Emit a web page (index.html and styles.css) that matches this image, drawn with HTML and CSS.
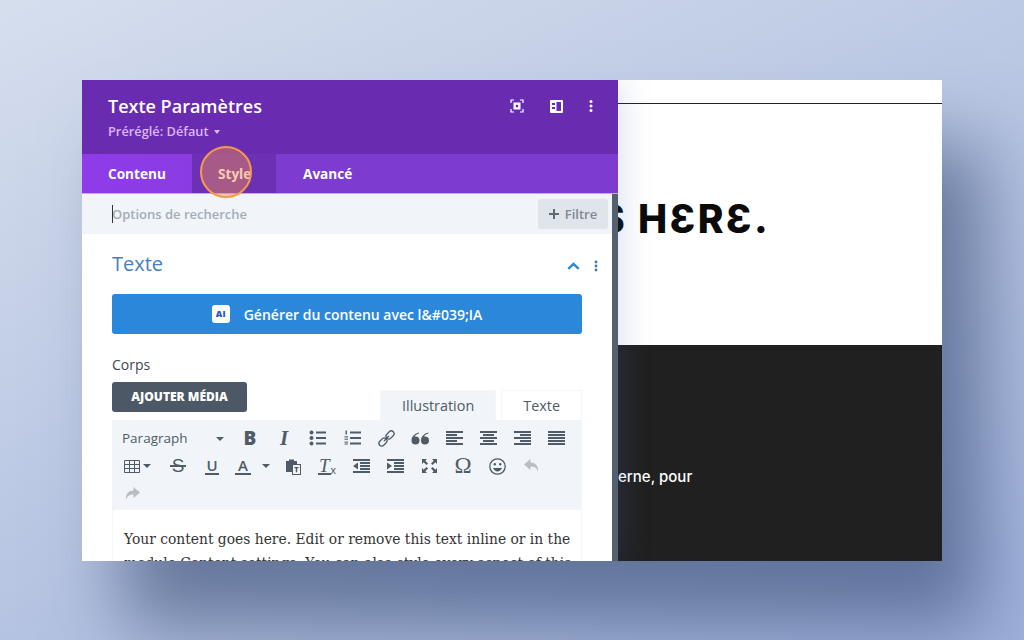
FILE: index.html
```html
<!DOCTYPE html>
<html>
<head>
    <title>Texte Paramètres</title>
    <link rel="stylesheet" href="styles.css">
</head>
<body>
    <div class="stage">
        <div class="page">
            <div class="page-top"></div>
            <div class="page-hero"><span class="hero-text">S HƐRƐ.</span></div>
            <div class="page-dark"><span class="dark-text">erne, pour</span></div>
        </div>

        <div class="panel">
            <div class="panel-head">
                <div class="panel-titles">
                    <div class="panel-title">Texte Paramètres</div>
                    <div class="panel-preset">Préréglé: Défaut <span class="caret-small"></span></div>
                </div>
                <div class="panel-icons">
                    <svg width="14" height="14" viewBox="0 0 14 14"><path d="M1 4V1h3M10 1h3v3M13 10v3h-3M4 13H1v-3" fill="none" stroke="#fff" stroke-width="1.2"/><rect x="3.5" y="3.5" width="7" height="7" fill="#fff"/><rect x="5.8" y="5.8" width="2.4" height="2.4" fill="#692cb0"/></svg>
                    <svg width="13" height="13" viewBox="0 0 13 13"><rect width="13" height="13" rx="1" fill="#fff"/><rect x="6.5" y="2" width="4.5" height="9" fill="#692cb0"/><rect x="2" y="3" width="3" height="2" fill="#692cb0"/><rect x="2" y="7" width="3" height="2" fill="#692cb0"/></svg>
                    <svg width="4" height="14" viewBox="0 0 4 14"><circle cx="2" cy="2.5" r="1.5" fill="#fff"/><circle cx="2" cy="7" r="1.5" fill="#fff"/><circle cx="2" cy="11.5" r="1.5" fill="#fff"/></svg>
                </div>
            </div>

            <div class="tabs">
                <div class="tab tab-first">Contenu</div>
                <div class="tab tab-active">Style<span class="pulse"></span></div>
                <div class="tab tab-last">Avancé</div>
            </div>

            <div class="panel-body">
                <div class="search-row">
                    <div class="search-input"><span class="cursor"></span>Options de recherche</div>
                    <div class="filter-btn">
                        <svg width="10" height="10" viewBox="0 0 10 10"><path d="M5 0v10M0 5h10" stroke="#5e6a76" stroke-width="2"/></svg>
                        <span>Filtre</span>
                    </div>
                </div>

                <div class="section">
                    <div class="section-head">
                        <div class="section-title">Texte</div>
                        <div class="section-tools">
                            <svg width="13" height="8" viewBox="0 0 13 8"><path d="M1.300 6.800 6.500 1.800l5.200 5" fill="none" stroke="#2b87da" stroke-width="2.300"/></svg>
                            <svg width="4" height="12" viewBox="0 0 4 12"><circle cx="2" cy="2" r="1.400" fill="#3b7cb8"/><circle cx="2" cy="6" r="1.400" fill="#3b7cb8"/><circle cx="2" cy="10" r="1.400" fill="#3b7cb8"/></svg>
                        </div>
                    </div>

                    <div class="ai-btn">
                        <span class="ai-badge">AI</span>
                        <span>Générer du contenu avec l&amp;#039;IA</span>
                    </div>

                    <div class="field-label">Corps</div>

                    <div class="media-row">
                        <div class="media-btn">AJOUTER MÉDIA</div>
                        <div class="editor-tabs">
                            <div class="editor-tab editor-tab-on">Illustration</div>
                            <div class="editor-tab">Texte</div>
                        </div>
                    </div>

                    <div class="toolbar">
                        <div class="tool-row">
                            <div class="format-select">Paragraph<span class="caret"></span></div>
                            <div class="tool tool-letter tool-b">B</div>
                            <div class="tool tool-letter tool-i">I</div>
                            <div class="tool"><svg width="18" height="16" viewBox="0 0 18 16"><g fill="#4f5b66"><circle cx="2.500" cy="2.500" r="2"/><circle cx="2.500" cy="8" r="2"/><circle cx="2.500" cy="13.500" r="2"/><rect x="7" y="1.500" width="10" height="2"/><rect x="7" y="7" width="10" height="2"/><rect x="7" y="12.500" width="10" height="2"/></g></svg></div>
                            <div class="tool"><svg width="17" height="16" viewBox="0 0 17 16"><g fill="#4f5b66"><rect x="6" y="1.500" width="11" height="2"/><rect x="6" y="7" width="11" height="2"/><rect x="6" y="12.500" width="11" height="2"/><rect x="1.500" y="0.500" width="1.400" height="4"/><rect x="0.500" y="6.300" width="3.500" height="1.100"/><rect x="0.500" y="8.600" width="3.500" height="1.100"/><rect x="0.500" y="11.600" width="3.500" height="1"/><rect x="0.500" y="13.500" width="3.500" height="1"/></g></svg></div>
                            <div class="tool"><svg width="17" height="17" viewBox="0 0 17 17"><g fill="none" stroke="#4f5b66" stroke-width="1.300" transform="rotate(-45 8.500 8.500)"><rect x="-1" y="5.700" width="9" height="5.600" rx="2.800"/><rect x="9" y="5.700" width="9" height="5.600" rx="2.800"/><path d="M5 8.500h7"/></g></svg></div>
                            <div class="tool"><svg width="18" height="13" viewBox="0 0 18 13"><path d="M8 0.500C3.500 1.500.5 4.500.5 8.500a4 4 0 1 0 4-4c-.4 0-.7 0-1 .1C4.200 3 5.800 2 8 1.500zM17.500.5c-4.500 1-7.500 4-7.500 8a4 4 0 1 0 4-4c-.4 0-.7 0-1 .1.700-1.600 2.300-2.600 4.500-3.100z" fill="#4f5b66"/></svg></div>
                            <div class="tool"><svg width="17" height="14" viewBox="0 0 17 14"><path d="M0 0h17v2H0zM0 3h11v2H0zM0 6h17v2H0zM0 9h11v2H0zM0 12h17v2H0z" fill="#4f5b66"/></svg></div>
                            <div class="tool"><svg width="17" height="14" viewBox="0 0 17 14"><path d="M0 0h17v2H0zM3 3h11v2H3zM0 6h17v2H0zM3 9h11v2H3zM0 12h17v2H0z" fill="#4f5b66"/></svg></div>
                            <div class="tool"><svg width="17" height="14" viewBox="0 0 17 14"><path d="M0 0h17v2H0zM6 3h11v2H6zM0 6h17v2H0zM6 9h11v2H6zM0 12h17v2H0z" fill="#4f5b66"/></svg></div>
                            <div class="tool"><svg width="17" height="14" viewBox="0 0 17 14"><path d="M0 0h17v2H0zM0 3h17v2H0zM0 6h17v2H0zM0 9h17v2H0zM0 12h17v2H0z" fill="#4f5b66"/></svg></div>
                        </div>
                        <div class="tool-row">
                            <div class="tool tool-table"><svg width="16" height="13" viewBox="0 0 16 13"><path d="M.5.5h15v12H.5zM.5 4.500h15M.5 8.500h15M5.500.5v12M10.500.5v12" fill="none" stroke="#4f5b66"/></svg><span class="caret caret-tight"></span></div>
                            <div class="tool tool-letter tool-s">S</div>
                            <div class="tool tool-letter tool-u"><span class="under">U</span></div>
                            <div class="tool tool-letter tool-a"><span class="under">A</span><span class="caret caret-a"></span></div>
                            <div class="tool"><svg width="16" height="17" viewBox="0 0 16 17"><path d="M1 3h3V1.500h5V3h3v3H7v8H1z" fill="#4f5b66"/><rect x="7.500" y="6.500" width="8" height="10" fill="#f1f5f9" stroke="#4f5b66"/><path d="M9.500 9h4v1.300h-1.300v4h-1.400v-4H9.500z" fill="#4f5b66"/></svg></div>
                            <div class="tool tool-letter tool-clear"><span class="under">T</span><span class="tool-x">x</span></div>
                            <div class="tool"><svg width="17" height="14" viewBox="0 0 17 14"><path d="M0 0h17v2H0zM7 3h10v2H7zM7 6h10v2H7zM7 9h10v2H7zM0 12h17v2H0zM5 3.500v7L0 7z" fill="#4f5b66"/></svg></div>
                            <div class="tool"><svg width="17" height="14" viewBox="0 0 17 14"><path d="M0 0h17v2H0zM7 3h10v2H7zM7 6h10v2H7zM7 9h10v2H7zM0 12h17v2H0zM0 3.500v7L5 7z" fill="#4f5b66"/></svg></div>
                            <div class="tool"><svg width="17" height="16" viewBox="0 0 17 16"><path d="M1 1h5L4.300 2.700 7 5.400 5.400 7 2.700 4.300 1 6zM16 1v5l-1.700-1.700L11.600 7 10 5.400l2.700-2.700L11 1zM1 15v-5l1.700 1.700L5.400 9 7 10.600l-2.700 2.700L6 15zM16 15h-5l1.700-1.700L10 10.600 11.600 9l2.700 2.700L16 10z" fill="#4f5b66"/></svg></div>
                            <div class="tool tool-letter tool-omega">Ω</div>
                            <div class="tool"><svg width="17" height="17" viewBox="0 0 17 17"><circle cx="8.500" cy="8.500" r="7.700" fill="none" stroke="#4f5b66" stroke-width="1.300"/><circle cx="5.800" cy="6.300" r="1.200" fill="#4f5b66"/><circle cx="11.200" cy="6.300" r="1.200" fill="#4f5b66"/><path d="M4 10c1 2.300 2.700 3.400 4.500 3.400S12 12.300 13 10z" fill="#4f5b66"/></svg></div>
                            <div class="tool"><svg width="15" height="14" viewBox="0 0 15 14"><path d="M6.500 0 0 5.500 6.500 11V7.500c3.500 0 6 1 7.500 5 .5-5-2-9-7.500-9z" fill="#b9bec4"/></svg></div>
                        </div>
                        <div class="tool-row">
                            <div class="tool tool-redo"><svg width="15" height="14" viewBox="0 0 15 14"><path d="M8.500 0 15 5.500 8.500 11V7.500c-3.500 0-6 1-7.500 5-.5-5 2-9 7.500-9z" fill="#b9bec4"/></svg></div>
                        </div>
                    </div>

                    <div class="editor-content">Your content goes here. Edit or remove this text inline or in the<br>module Content settings. You can also style every aspect of this</div>
                </div>
            </div>
        </div>
    </div>
</body>
</html>
```

FILE: styles.css
```css
/* Backdrop */
html, body {
    margin: 0;
    padding: 0;
}
body {
    width: 1024px;
    height: 640px;
    overflow: hidden;
    background: linear-gradient(155deg, #d6deee 0%, #c2cee6 35%, #aebde0 70%, #a0b2dc 100%);
}
.stage {
    position: relative;
    display: flex;
    width: 860px;
    height: 481px;
    margin: 80px 0 0 82px;
    background: #fff;
    overflow: hidden;
    box-shadow: 40px 65px 70px rgba(50, 70, 110, 0.6);
}

/* Page behind the panel */
.page {
    display: flex;
    flex-direction: column;
    width: 100%;
}
.page-top {
    height: 23px;
    border-bottom: 1px solid #222;
    background: #fff;
}
.page-hero {
    height: 241px;
    background: #fff;
    padding-left: 517px;
    box-sizing: border-box;
}
.hero-text {
    display: block;
    margin-top: 91px;
    font: 800 39px/48px Inter, "Liberation Sans", sans-serif;
    letter-spacing: 2.4px;
    color: #0b0b0b;
}
.page-dark {
    flex: 1;
    background: #202020;
    padding-left: 536px;
}
.dark-text {
    display: block;
    margin-top: 122px;
    font: 500 15px/20px Inter, "Liberation Sans", sans-serif;
    color: #fff;
}

/* Settings panel */
.panel {
    position: absolute;
    left: 0;
    top: 0;
    width: 536px;
    height: 481px;
    overflow: hidden;
    font-family: "Open Sans", sans-serif;
    box-shadow: 4px 0 30px rgba(70, 110, 180, 0.2);
}
.panel-head {
    display: flex;
    justify-content: space-between;
    height: 74px;
    box-sizing: border-box;
    padding: 14px 25px 0 26px;
    background: #692cb0;
}
.panel-title {
    font-size: 18px;
    line-height: 24px;
    font-weight: 600;
    color: #fff;
}
.panel-preset {
    margin-top: 5px;
    font-size: 12.8px;
    line-height: 17px;
    font-weight: 600;
    color: #d9b8f5;
}
.caret-small {
    display: inline-block;
    margin-left: 2px;
    vertical-align: 2px;
    border: 3px solid transparent;
    border-top: 4px solid #d9b8f5;
    border-bottom: 0;
}
.panel-icons {
    display: flex;
    align-items: center;
    gap: 26px;
    height: 24px;
}
.tabs {
    display: flex;
    height: 40px;
    box-sizing: border-box;
    background: #7d3bcf;
    border-bottom: 1px solid #c9a8ea;
}
.tab {
    font-size: 13.6px;
    line-height: 39px;
    font-weight: 700;
    color: #fff;
    padding: 0 26px;
}
.tab-first {
    width: 58px;
    background: linear-gradient(90deg, #8f3bea, #8a3ce2);
}
.tab-active {
    position: relative;
    width: 32px;
    background: #6c30b5;
}
.tab-last {
    padding-left: 27px;
}
.pulse {
    position: absolute;
    left: 8px;
    top: -8px;
    width: 52px;
    height: 52px;
    box-sizing: border-box;
    border: 2px solid #f59a4c;
    border-radius: 50%;
    background: rgba(240, 140, 80, 0.45);
}

/* Panel body */
.panel-body {
    width: 530px;
    height: 367px;
    background: #fff;
    border-right: 6px solid #54606e;
    overflow: hidden;
}
.search-row {
    display: flex;
    align-items: center;
    justify-content: space-between;
    height: 40px;
    padding: 0 4px 0 30px;
    background: #f1f5f9;
}
.search-input {
    position: relative;
    font-size: 13px;
    font-weight: 600;
    color: #a3adb8;
}
.cursor {
    position: absolute;
    left: 0;
    top: 0;
    width: 1px;
    height: 18px;
    background: #333;
}
.filter-btn {
    display: flex;
    align-items: center;
    justify-content: center;
    gap: 6px;
    width: 70px;
    height: 30px;
    border-radius: 3px;
    background: #e0e5eb;
    font-size: 13px;
    font-weight: 600;
    color: #7e8993;
}
.section {
    padding: 0 30px;
}
.section-head {
    position: relative;
    height: 60px;
}
.section-title {
    font-size: 20px;
    line-height: 60px;
    color: #4680bc;
}
.section-tools {
    position: absolute;
    right: -16px;
    top: 26px;
    display: flex;
    align-items: center;
    gap: 14px;
}
.ai-btn {
    display: flex;
    align-items: center;
    justify-content: center;
    gap: 14px;
    height: 40px;
    border-radius: 3px;
    background: #2b87da;
    font-size: 14px;
    font-weight: 600;
    color: #fff;
}
.ai-badge {
    width: 18px;
    height: 18px;
    border-radius: 3px;
    background: #fff;
    font-size: 9px;
    line-height: 18px;
    font-weight: 800;
    text-align: center;
    color: #1f55c9;
}
.field-label {
    margin-top: 21px;
    font-size: 14px;
    line-height: 20px;
    font-weight: 500;
    color: #3d4650;
}
.media-row {
    display: flex;
    justify-content: space-between;
    align-items: flex-end;
    height: 38px;
    margin-top: 7px;
}
.media-btn {
    align-self: flex-start;
    width: 135px;
    height: 30px;
    border-radius: 3px;
    background: #4c5866;
    font-size: 12px;
    line-height: 30px;
    font-weight: 800;
    text-align: center;
    color: #fff;
}
.editor-tabs {
    display: flex;
    gap: 5px;
}
.editor-tab {
    padding: 0 21px;
    height: 30px;
    border: 1px solid #f4f6f9;
    border-bottom: 0;
    box-sizing: border-box;
    font-size: 14.4px;
    line-height: 30px;
    font-weight: 500;
    color: #4f5b66;
}
.editor-tab-on {
    background: #f1f5f9;
}

.toolbar {
    height: 90px;
    padding: 4px 0 0 10px;
    box-sizing: border-box;
    background: #f1f5f9;
}
.tool-row {
    display: flex;
    align-items: center;
    height: 28px;
}
.format-select {
    position: relative;
    width: 111px;
    font-size: 13.5px;
    font-weight: 500;
    color: #4f5b66;
}
.caret {
    display: inline-block;
    border: 4px solid transparent;
    border-top: 4px solid #4f5b66;
    border-bottom: 0;
}
.format-select .caret {
    position: absolute;
    left: 94px;
    top: 8px;
}
.tool {
    position: relative;
    display: flex;
    align-items: center;
    justify-content: center;
    flex: none;
    width: 34px;
    height: 28px;
    color: #4f5b66;
}
.tool-table {
    width: 39px;
    padding-left: 2px;
    box-sizing: border-box;
    justify-content: flex-start;
}
.caret-tight {
    margin-left: 3px;
}
.tool-redo {
    width: 20px;
    justify-content: flex-start;
    padding-left: 3px;
    box-sizing: border-box;
}
.tool-letter {
    font-family: "Liberation Sans", sans-serif;
    font-size: 18px;
}
.tool-b {
    font-family: "Open Sans", sans-serif;
    font-size: 19px;
    font-weight: 800;
}
.tool-i {
    font-family: "Liberation Serif", serif;
    font-style: italic;
    font-weight: 700;
    font-size: 21px;
}
.tool-s {
    font-size: 19px;
}
.tool-s::after {
    content: "";
    position: absolute;
    left: 9px;
    right: 9px;
    top: 13px;
    height: 1.5px;
    background: #4f5b66;
}
.under {
    display: block;
    border-bottom: 2px solid #4f5b66;
    line-height: 15px;
    padding: 0 1px;
}
.tool-u {
    font-family: "Open Sans", sans-serif;
    font-size: 15px;
    font-weight: 600;
}
.tool-a {
    width: 47px;
    padding-left: 6px;
    box-sizing: border-box;
    justify-content: flex-start;
    font-family: "Open Sans", sans-serif;
    font-size: 15px;
    font-weight: 600;
}
.tool-a .under {
    padding: 0 3px;
}
.caret-a {
    position: absolute;
    left: 33px;
    top: 12px;
}
.tool-clear {
    font-family: "Liberation Serif", serif;
    font-style: italic;
    font-size: 19px;
}
.tool-x {
    align-self: flex-end;
    margin: 0 0 5px 0;
    font-family: "Liberation Sans", sans-serif;
    font-style: normal;
    font-size: 11px;
    line-height: 10px;
}
.tool-omega {
    font-family: "Liberation Serif", serif;
    font-size: 23px;
}
.editor-content {
    padding: 17px 11px 0;
    border: 1px solid #f4f6f9;
    border-top: 0;
    white-space: nowrap;
    font-family: "DejaVu Serif", serif;
    font-size: 13.85px;
    line-height: 24px;
    color: #333;
}
```
